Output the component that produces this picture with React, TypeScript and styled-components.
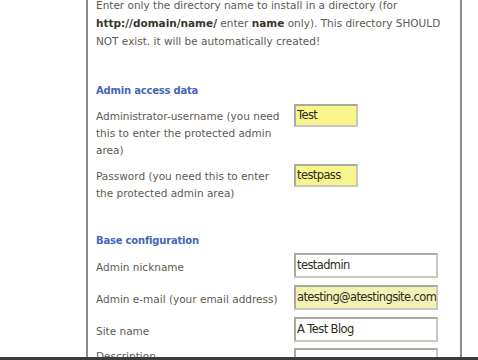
import React from "react";
import styled, { createGlobalStyle } from "styled-components";

const Global = createGlobalStyle`
  html, body { margin: 0; padding: 0; background: #ffffff; overflow: hidden; }
  #root { width: 478px; height: 360px; }
`;

const Page = styled.div`
  width: 478px;
  height: 360px;
  display: flex;
  flex-direction: column;
  background: #ffffff;
  overflow: hidden;
`;

const Stage = styled.div`
  flex: 1;
  display: flex;
  min-height: 0;
`;

const BottomBar = styled.div`
  height: 3px;
  background: #3c3c3c;
`;

const Panel = styled.div`
  margin-left: 86px;
  width: 356px;
  border-left: 2px solid #8c8c8c;
  border-right: 2px solid #8c8c8c;
  padding: 0 8px;
  box-sizing: content-box;
  font-family: "DejaVu Sans", Verdana, sans-serif;
  font-size: 10.5px;
  color: #5e5a52;
  overflow: hidden;
`;

const Intro = styled.p`
  margin: -4px 0 0 0;
  line-height: 18px;
`;

const B = styled.b`
  color: #3a3630;
`;

const Heading = styled.div<{ $top: number }>`
  margin-top: ${(p) => p.$top}px;
  color: #4466b8;
  font-size: 10px;
  line-height: 17px;
  font-weight: bold;
  letter-spacing: -0.2px;
`;

const Row = styled.div<{ $gap: number }>`
  display: grid;
  grid-template-columns: 198px auto;
  align-items: start;
  margin-top: ${(p) => p.$gap}px;
`;

const Label = styled.div<{ $pad: number }>`
  line-height: 17px;
  padding-top: ${(p) => p.$pad}px;
  width: 192px;
`;

const Field = styled.div<{ $w: number; $h: number; $bg: string }>`
  box-sizing: border-box;
  width: ${(p) => p.$w}px;
  height: ${(p) => p.$h}px;
  border: 2px solid #a9a9a0;
  border-right-color: #c8c8c0;
  border-bottom-color: #c8c8c0;
  background: ${(p) => p.$bg};
  font-family: "DejaVu Sans", Verdana, sans-serif;
  font-size: 11.5px;
  letter-spacing: -0.6px;
  color: #2e2c20;
  line-height: ${(p) => p.$h - 4}px;
  padding-left: 1px;
  white-space: nowrap;
  overflow: hidden;
`;

const YELLOW = "#f7f58c";
const PALE = "#f3f1b4";
const WHITE = "#ffffff";

export default function App() {
  return (
    <Page>
      <Global />
      <Stage>
        <Panel>
          <Intro>
            Enter only the directory name to install in a directory (for{" "}
            <B>http://domain/name/</B> enter <B>name</B> only). This directory SHOULD
            NOT exist. it will be automatically created!
          </Intro>
          <Heading $top={32}>Admin access data</Heading>
          <Row $gap={5}>
            <Label $pad={4}>
              Administrator-username (you need this to enter the protected admin area)
            </Label>
            <Field $w={64} $h={23} $bg={YELLOW}>Test</Field>
          </Row>
          <Row $gap={5}>
            <Label $pad={4}>Password (you need this to enter the protected admin area)</Label>
            <Field $w={64} $h={23} $bg={YELLOW}>testpass</Field>
          </Row>
          <Heading $top={30}>Base configuration</Heading>
          <Row $gap={4}>
            <Label $pad={6}>Admin nickname</Label>
            <Field $w={144} $h={25} $bg={WHITE}>testadmin</Field>
          </Row>
          <Row $gap={7}>
            <Label $pad={6}>Admin e-mail (your email address)</Label>
            <Field $w={144} $h={25} $bg={PALE}>atesting@atestingsite.com</Field>
          </Row>
          <Row $gap={7}>
            <Label $pad={6}>Site name</Label>
            <Field $w={144} $h={25} $bg={WHITE}>A Test Blog</Field>
          </Row>
          <Row $gap={6}>
            <Label $pad={0}>Description</Label>
            <Field $w={144} $h={25} $bg={WHITE}></Field>
          </Row>
        </Panel>
      </Stage>
      <BottomBar />
    </Page>
  );
}
